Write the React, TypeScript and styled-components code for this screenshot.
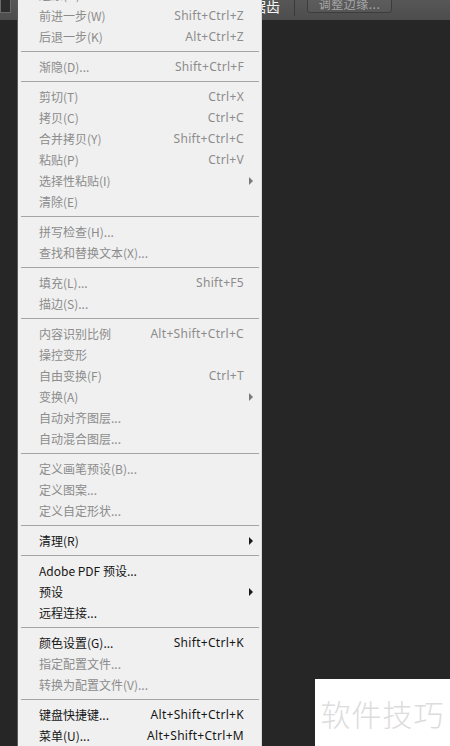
import React from "react";
import styled, { createGlobalStyle } from "styled-components";

const Global = createGlobalStyle`
  html, body { margin: 0; padding: 0; background: #262626; }
  body { width: 450px; height: 746px; overflow: hidden; font-family: "Noto Sans CJK SC", "Noto Sans", sans-serif; }
  #root { width: 450px; height: 746px; }
`;

const Page = styled.div`
  position: relative;
  width: 450px;
  height: 746px;
  background: #262626;
  overflow: hidden;
`;

const Toolbar = styled.div`
  height: 20px;
  background: linear-gradient(#575757, #4d4d4d);
  display: flex;
  align-items: flex-start;
`;

const ToolBox = styled.div`
  width: 9px;
  height: 12px;
  border: 1px solid #6a6a6a;
  border-top: none;
  background: #2c2c2c;
`;

const ToolLabel = styled.span`
  margin-left: 213px;
  margin-top: -3px;
  font-size: 14px;
  line-height: 18px;
  color: #f4f4f4;
  font-family: "Noto Sans CJK SC", sans-serif;
`;

const ToolSep = styled.div`
  width: 1px;
  height: 16px;
  background: #3a3a3a;
  margin-left: 14px;
`;

const ToolButton = styled.div`
  margin-left: 12px;
  width: 85px;
  height: 20px;
  margin-top: -7px;
  box-sizing: border-box;
  border: 1px solid #3c3c3c;
  border-radius: 3px;
  background: linear-gradient(#606060, #575757);
  color: #a6a6a6;
  font-size: 12px;
  line-height: 20px;
  text-align: center;
  letter-spacing: 0.5px;
`;

const Menu = styled.div`
  position: absolute;
  left: 17px;
  top: -19px;
  width: 245px;
  box-sizing: border-box;
  background: #f0f0f0;
  border-left: 1px solid #5c5c5c;
  border-right: 1px solid #d8d8d8;
  padding: 3px 0 0 0;
  display: flex;
  flex-direction: column;
`;

const Row = styled.div<{ $on?: boolean }>`
  height: 21px;
  display: flex;
  align-items: center;
  padding: 0 17px 0 21px;
  font-size: 12px;
  color: ${(p) => (p.$on ? "#161616" : "#8c8c8c")};
  white-space: nowrap;
`;

const Label = styled.span`
  flex: 1;
`;

const Keys = styled.span`
  font-family: "Noto Sans", "Noto Sans CJK SC", sans-serif;
  letter-spacing: 0.3px;
`;

const Arrow = styled.span<{ $on?: boolean }>`
  width: 0;
  height: 0;
  border-top: 4px solid transparent;
  border-bottom: 4px solid transparent;
  border-left: 4px solid ${(p) => (p.$on ? "#1a1a1a" : "#7a7a7a")};
  margin-right: -9px;
`;

const Sep = styled.div`
  height: 9px;
  display: flex;
  align-items: center;
  padding: 0 2px 0 3px;
  &::after {
    content: "";
    flex: 1;
    height: 1px;
    background: #a4a4a4;
  }
`;

const Watermark = styled.div`
  position: absolute;
  left: 315px;
  top: 679px;
  width: 135px;
  height: 67px;
  background: #ffffff;
  display: flex;
  align-items: center;
  justify-content: center;
  font-size: 30px;
  color: #dcdcdc;
  letter-spacing: 1px;
  font-family: "Noto Sans CJK SC", sans-serif;
  font-weight: 300;
`;

type Item = { t: string; k?: string; on?: boolean; sub?: boolean } | "sep";

const items: Item[] = [
  { t: "还原(O)", k: "Ctrl+Z" },
  { t: "前进一步(W)", k: "Shift+Ctrl+Z" },
  { t: "后退一步(K)", k: "Alt+Ctrl+Z" },
  "sep",
  { t: "渐隐(D)...", k: "Shift+Ctrl+F" },
  "sep",
  { t: "剪切(T)", k: "Ctrl+X" },
  { t: "拷贝(C)", k: "Ctrl+C" },
  { t: "合并拷贝(Y)", k: "Shift+Ctrl+C" },
  { t: "粘贴(P)", k: "Ctrl+V" },
  { t: "选择性粘贴(I)", sub: true },
  { t: "清除(E)" },
  "sep",
  { t: "拼写检查(H)..." },
  { t: "查找和替换文本(X)..." },
  "sep",
  { t: "填充(L)...", k: "Shift+F5" },
  { t: "描边(S)..." },
  "sep",
  { t: "内容识别比例", k: "Alt+Shift+Ctrl+C" },
  { t: "操控变形" },
  { t: "自由变换(F)", k: "Ctrl+T" },
  { t: "变换(A)", sub: true },
  { t: "自动对齐图层..." },
  { t: "自动混合图层..." },
  "sep",
  { t: "定义画笔预设(B)..." },
  { t: "定义图案..." },
  { t: "定义自定形状..." },
  "sep",
  { t: "清理(R)", sub: true, on: true },
  "sep",
  { t: "Adobe PDF 预设...", on: true },
  { t: "预设", sub: true, on: true },
  { t: "远程连接...", on: true },
  "sep",
  { t: "颜色设置(G)...", k: "Shift+Ctrl+K", on: true },
  { t: "指定配置文件..." },
  { t: "转换为配置文件(V)..." },
  "sep",
  { t: "键盘快捷键...", k: "Alt+Shift+Ctrl+K", on: true },
  { t: "菜单(U)...", k: "Alt+Shift+Ctrl+M", on: true },
];

export default function App() {
  return (
    <Page>
      <Global />
      <Toolbar>
        <ToolBox />
        <ToolLabel>消除锯齿</ToolLabel>
        <ToolSep />
        <ToolButton>调整边缘...</ToolButton>
      </Toolbar>
      <Menu>
        {items.map((it, i) =>
          it === "sep" ? (
            <Sep key={i} />
          ) : (
            <Row key={i} $on={it.on}>
              <Label>{it.t}</Label>
              {it.k && <Keys>{it.k}</Keys>}
              {it.sub && <Arrow $on={it.on} />}
            </Row>
          )
        )}
      </Menu>
      <Watermark>软件技巧</Watermark>
    </Page>
  );
}
